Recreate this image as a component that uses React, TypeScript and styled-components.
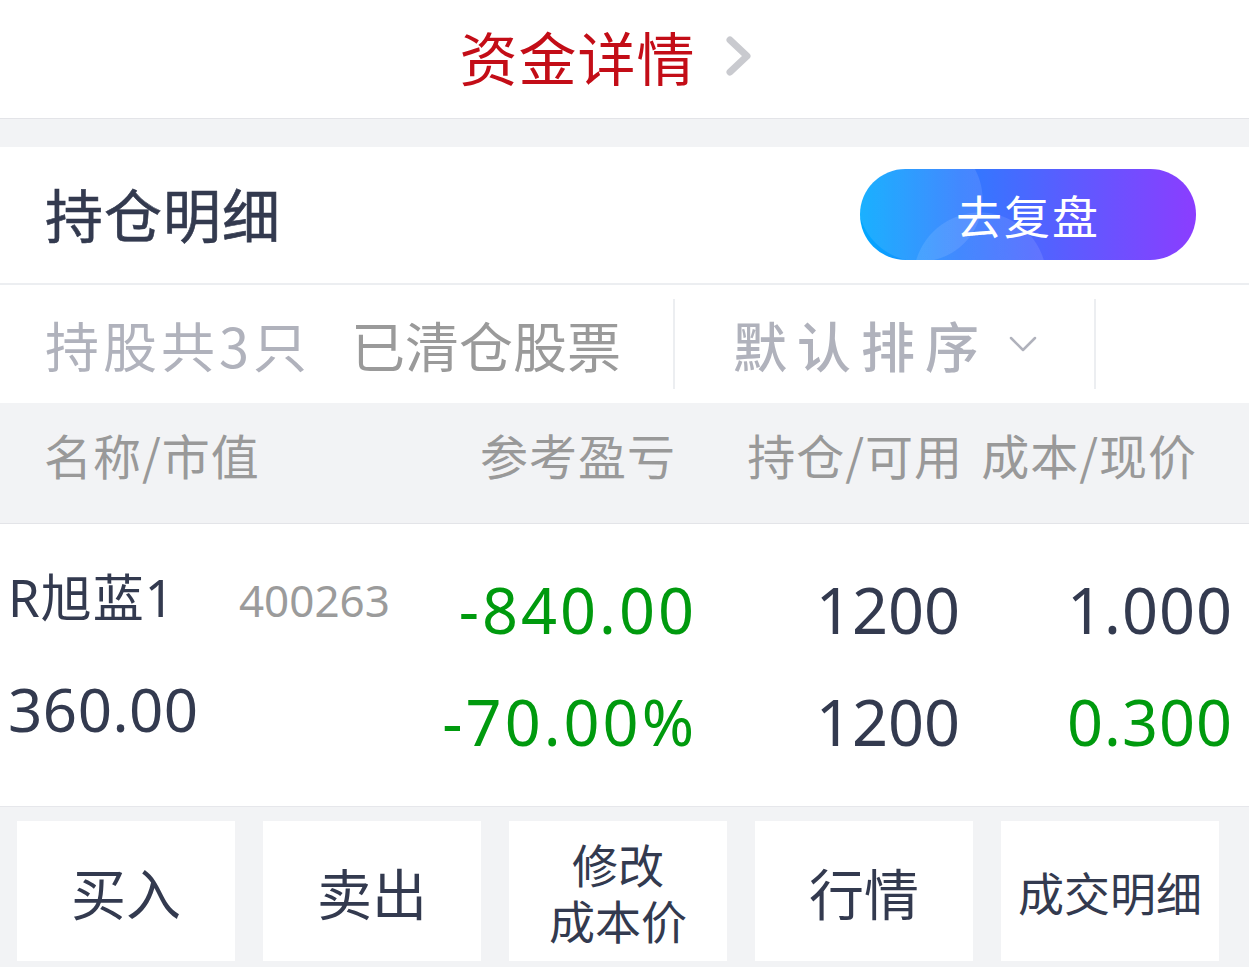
import React from "react";
import styled, { createGlobalStyle } from "styled-components";

const Global = createGlobalStyle`
  html, body { margin: 0; padding: 0; background: #ffffff; }
  body { font-family: "Noto Sans", "Noto Sans CJK SC", sans-serif; -webkit-font-smoothing: antialiased; }
  * { box-sizing: border-box; }
`;

const Page = styled.div`
  width: 1249px;
  height: 967px;
  overflow: hidden;
  background: #f2f3f5;
  display: flex;
  flex-direction: column;
`;

const TopBar = styled.div`
  height: 119px;
  background: #fff;
  border-bottom: 1px solid #e3e4e8;
  display: flex;
  align-items: center;
  justify-content: center;
  gap: 28px;
  padding-right: 36px;
  padding-bottom: 6px;
`;

const TopTitle = styled.div`
  font-family: "Noto Sans CJK SC", sans-serif;
  font-size: 58px;
  color: #c30d17;
  letter-spacing: 1px;
`;

const Spacer = styled.div`
  height: 28px;
`;

const SectionHead = styled.div`
  height: 138px;
  background: #fff;
  border-bottom: 2px solid #eceef1;
  display: flex;
  align-items: center;
  justify-content: space-between;
  padding: 0 53px 0 45px;
`;

const SectionTitle = styled.div`
  font-family: "Noto Sans CJK SC", sans-serif;
  font-size: 58px;
  font-weight: 400;
  color: #333a4f;
  letter-spacing: 1px;
  padding-bottom: 4px;
  -webkit-text-stroke: 0.6px #333a4f;
`;

const ReviewButton = styled.div`
  width: 336px;
  height: 91px;
  margin-top: -2px;
  border-radius: 46px;
  display: flex;
  align-items: center;
  justify-content: center;
  color: #fff;
  font-family: "Noto Sans CJK SC", sans-serif;
  font-size: 46px;
  letter-spacing: 2px;
  background:
    radial-gradient(circle at 60px 30px, rgba(255,255,255,0.10) 0 62px, transparent 63px),
    radial-gradient(circle at 120px 110px, rgba(255,255,255,0.10) 0 66px, transparent 67px),
    linear-gradient(90deg, #00a8ff 0%, #2e7bff 30%, #5b5cff 62%, #8b3dff 100%);
`;

const Tabs = styled.div`
  height: 118px;
  background: #fff;
  display: flex;
  align-items: center;
`;

const TabText = styled.div<{ $color: string; $spacing?: number; $weight?: number }>`
  font-family: "Noto Sans CJK SC", sans-serif;
  font-size: 54px;
  color: ${(p) => p.$color};
  letter-spacing: ${(p) => p.$spacing ?? 0}px;
  font-weight: ${(p) => p.$weight ?? 400};
  white-space: nowrap;
`;

const TabGroup = styled.div`
  display: flex;
  align-items: center;
  gap: 40px;
  padding-left: 45px;
  width: 673px;
`;

const Divider = styled.div`
  width: 2px;
  height: 90px;
  background: #eceef1;
`;

const SortBox = styled.div`
  width: 419px;
  display: flex;
  align-items: center;
  padding-left: 58px;
  gap: 20px;
`;

const HeaderRow = styled.div`
  height: 121px;
  background: #f2f3f5;
  border-bottom: 1px solid #e3e4e8;
  display: grid;
  grid-template-columns: 430px 202px 287px 234px;
  align-items: center;
  padding-left: 44px;
  padding-bottom: 18px;
`;

const HeadCell = styled.div<{ $right?: boolean }>`
  font-family: "Noto Sans CJK SC", sans-serif;
  font-size: 48px;
  letter-spacing: 1px;
  color: #999999;
  text-align: ${(p) => (p.$right ? "right" : "left")};
  white-space: nowrap;
`;

const DataRow = styled.div`
  height: 283px;
  background: #fff;
  border-bottom: 1px solid #e6e7eb;
  display: grid;
  grid-template-columns: 432px 252px 266px 272px;
  padding-left: 8px;
  padding-top: 30px;
`;

const NameCol = styled.div`
  display: flex;
  flex-direction: column;
`;

const NameLine = styled.div`
  display: flex;
  align-items: baseline;
  gap: 64px;
  height: 104px;
  padding-top: 4px;
`;

const StockName = styled.span`
  font-family: "Noto Sans", "Noto Sans CJK SC", sans-serif;
  font-size: 51px;
  letter-spacing: 1px;
  color: #333a4f;
`;

const StockCode = styled.span`
  font-family: "Noto Sans", sans-serif;
  font-size: 44px;
  color: #9b9b9b;
`;

const MarketValue = styled.div`
  font-family: "Noto Sans", sans-serif;
  font-size: 60px;
  color: #333a4f;
  line-height: 110px;
  margin-top: -4px;
  letter-spacing: 0.5px;
`;

const NumCol = styled.div`
  display: flex;
  flex-direction: column;
  align-items: flex-end;
`;

const Num = styled.div<{ $green?: boolean; $spacing?: number }>`
  font-family: "Noto Sans", sans-serif;
  font-size: 63px;
  line-height: 112px;
  letter-spacing: ${(p) => p.$spacing ?? 0}px;
  margin-right: ${(p) => -(p.$spacing ?? 0) - 2}px;
  color: ${(p) => (p.$green ? "#009a0e" : "#333a4f")};
  white-space: nowrap;
`;

const ActionBar = styled.div`
  flex: 1;
  display: grid;
  grid-template-columns: repeat(5, 218px);
  column-gap: 28px;
  padding: 14px 0 0 17px;
`;

const ActionButton = styled.div<{ $size?: number }>`
  height: 140px;
  background: #fff;
  display: flex;
  align-items: center;
  justify-content: center;
  text-align: center;
  font-family: "Noto Sans CJK SC", sans-serif;
  font-size: ${(p) => p.$size ?? 55}px;
  line-height: ${(p) => (p.$size ? 56 : 60)}px;
  color: #333a4f;
`;

const Chevron = () => (
  <svg width="30" height="44" viewBox="0 0 30 44" fill="none">
    <path d="M6 6 L23 22 L6 38" stroke="#c9cacf" strokeWidth="7" strokeLinecap="round" strokeLinejoin="round" />
  </svg>
);

const DownArrow = () => (
  <svg width="28" height="18" viewBox="0 0 28 18" fill="none">
    <path d="M2 3 L14 15 L26 3" stroke="#b0b2bc" strokeWidth="2.5" strokeLinecap="round" strokeLinejoin="round" />
  </svg>
);

export default function App() {
  return (
    <>
      <Global />
      <Page>
        <TopBar>
          <TopTitle>资金详情</TopTitle>
          <Chevron />
        </TopBar>
        <Spacer />
        <SectionHead>
          <SectionTitle>持仓明细</SectionTitle>
          <ReviewButton>去复盘</ReviewButton>
        </SectionHead>
        <Tabs>
          <TabGroup>
            <TabText $color="#b0b2bc" $spacing={4}>持股共3只</TabText>
            <TabText $color="#9a9a9a">已清仓股票</TabText>
          </TabGroup>
          <Divider />
          <SortBox>
            <TabText $color="#b0b2bc" $spacing={10} $weight={500}>默认排序</TabText>
            <DownArrow />
          </SortBox>
          <Divider />
        </Tabs>
        <HeaderRow>
          <HeadCell>名称/市值</HeadCell>
          <HeadCell $right>参考盈亏</HeadCell>
          <HeadCell $right>持仓/可用</HeadCell>
          <HeadCell $right>成本/现价</HeadCell>
        </HeaderRow>
        <DataRow>
          <NameCol>
            <NameLine>
              <StockName>R旭蓝1</StockName>
              <StockCode>400263</StockCode>
            </NameLine>
            <MarketValue>360.00</MarketValue>
          </NameCol>
          <NumCol>
            <Num $green $spacing={3}>-840.00</Num>
            <Num $green $spacing={3}>-70.00%</Num>
          </NumCol>
          <NumCol>
            <Num>1200</Num>
            <Num>1200</Num>
          </NumCol>
          <NumCol>
            <Num $spacing={1}>1.000</Num>
            <Num $green $spacing={1}>0.300</Num>
          </NumCol>
        </DataRow>
        <ActionBar>
          <ActionButton>买入</ActionButton>
          <ActionButton>卖出</ActionButton>
          <ActionButton $size={46}>修改<br />成本价</ActionButton>
          <ActionButton>行情</ActionButton>
          <ActionButton $size={46}>成交明细</ActionButton>
        </ActionBar>
      </Page>
    </>
  );
}
